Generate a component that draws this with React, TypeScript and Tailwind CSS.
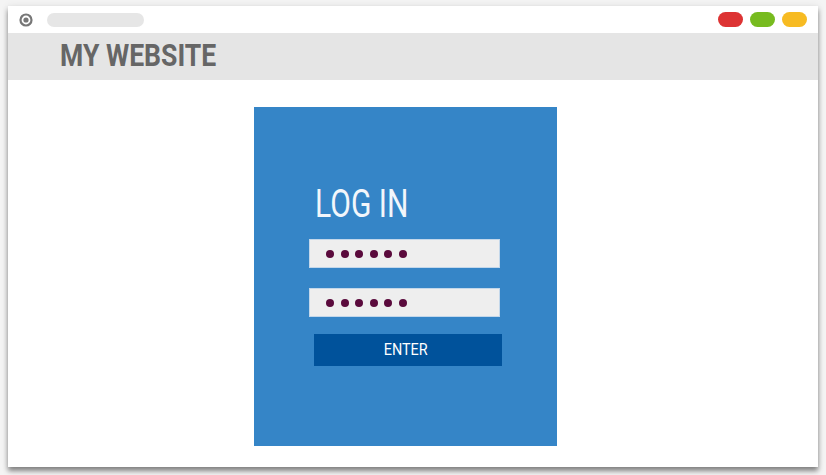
import React from "react";

const Dots = () => (
  <div className="flex gap-[6.5px]">
    {[0, 1, 2, 3, 4, 5].map((i) => (
      <span key={i} className="block w-[8px] h-[8px] rounded-full bg-[#5a0a3c]" />
    ))}
  </div>
);

export default function App() {
  return (
    <div className="w-[826px] h-[475px] bg-[#f4f4f4] pt-[6px] pl-[8px] overflow-hidden" style={{ fontFamily: "Roboto, 'Noto Sans', sans-serif" }}>
      <div className="w-[810px] h-[461px] bg-white flex flex-col shadow-[0_4px_5px_rgba(0,0,0,0.45),0_0_8px_rgba(0,0,0,0.08)]">
        <div className="h-[27px] flex items-center pl-[11px] pr-[11px]">
          <svg width="14" height="14" viewBox="0 0 14 14" className="block">
            <circle cx="7" cy="7" r="5.5" fill="none" stroke="#777" strokeWidth="2.2" />
            <circle cx="7" cy="7" r="2.6" fill="#777" />
          </svg>
          <div className="ml-[14px] w-[97px] h-[14px] rounded-full bg-[#e6e6e6]" />
          <div className="ml-auto flex gap-[7px]">
            <span className="block w-[25px] h-[15px] rounded-full bg-[#dd3333]" />
            <span className="block w-[25px] h-[15px] rounded-full bg-[#77bb1f]" />
            <span className="block w-[25px] h-[15px] rounded-full bg-[#f7bb22]" />
          </div>
        </div>
        <div className="h-[47px] bg-[#e5e5e5] pl-[52px] pt-[6px]">
          <div className="text-[32px] leading-none font-bold text-[#666666] origin-left scale-x-[0.83] whitespace-nowrap">MY WEBSITE</div>
        </div>
        <div className="pl-[246px] pt-[27px]">
          <div className="w-[303px] h-[339px] bg-[#3585c7] pt-[78px]">
            <div className="pl-[61px]">
              <div className="text-[39px] leading-none font-normal text-[#f2f6fb] origin-left scale-x-[0.77] whitespace-nowrap">LOG IN</div>
            </div>
            <div className="ml-[55px] mt-[15px] w-[191px] h-[29px] bg-[#eeeeee] border border-[#c3d7ea] flex items-center pl-[16px]">
              <Dots />
            </div>
            <div className="ml-[55px] mt-[20px] w-[191px] h-[29px] bg-[#eeeeee] border border-[#c3d7ea] flex items-center pl-[16px]">
              <Dots />
            </div>
            <div className="ml-[60px] mt-[17px] w-[188px] h-[32px] bg-[#00529b] flex items-center justify-center">
              <span className="text-[16px] leading-none font-normal text-white scale-x-[0.9] pr-[6px]">ENTER</span>
            </div>
          </div>
        </div>
      </div>
    </div>
  );
}
